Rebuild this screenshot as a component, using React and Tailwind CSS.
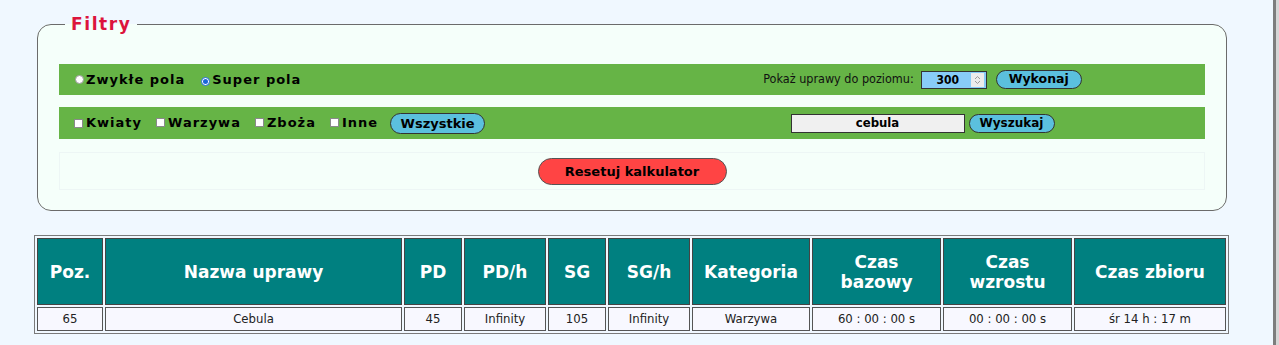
import React from "react";

const V = "font-['DejaVu_Sans',Verdana,sans-serif]";
const T = "font-['DejaVu_Sans_Condensed','DejaVu_Sans',Tahoma,sans-serif]";

function Radio({ checked }) {
  return checked ? (
    <span className="inline-flex w-[9px] h-[9px] rounded-full border border-[#1a66d9] bg-white items-center justify-center shrink-0">
      <span className="w-[5px] h-[5px] rounded-full bg-[#1a66d9]" />
    </span>
  ) : (
    <span className="inline-block w-[9px] h-[9px] rounded-full border border-[#9a9a9a] bg-white shrink-0" />
  );
}

function Check() {
  return <span className="inline-block w-[9px] h-[9px] border border-[#8a8a8a] bg-white shrink-0" />;
}

const headers = [
  ["Poz.", "w-[66px]"],
  ["Nazwa uprawy", "w-[297px]"],
  ["PD", "w-[58px]"],
  ["PD/h", "w-[82px]"],
  ["SG", "w-[58px]"],
  ["SG/h", "w-[82px]"],
  ["Kategoria", "w-[118px]"],
  ["Czas bazowy", "w-[129px]"],
  ["Czas wzrostu", "w-[129px]"],
  ["Czas zbioru", "w-[152px]"],
];

const row = ["65", "Cebula", "45", "Infinity", "105", "Infinity", "Warzywa", "60 : 00 : 00 s", "00 : 00 : 00 s", "śr 14 h : 17 m"];

export default function App() {
  return (
    <div className="min-h-[345px] w-[1279px] bg-[#f0f8ff] flex">
      <div className="flex-1">
        <fieldset className={`mt-[14px] ml-[37px] w-[1190px] border border-[#6b6b6b] rounded-[14px] bg-[#f5fffa] px-[21px] pt-[30px] pb-[20px] ${V}`}>
          <legend className="ml-[6px] px-[6px] text-[17px] leading-[20px] font-bold tracking-[1.6px] text-[#dc143c]">Filtry</legend>

          <div className="grid grid-cols-2 h-[31px] bg-[#66b446] text-black">
            <div className="flex items-center pl-[16px] text-[13px] font-bold tracking-[1px]">
              <Radio />
              <span className="ml-[2px]">Zwykłe pola</span>
              <span className="ml-[16px]"><Radio checked /></span>
              <span className="ml-[2px]">Super pola</span>
            </div>
            <div className="flex items-center justify-center pl-[8px]">
              <span className={`${T} text-[12.5px] text-[#111]`}>Pokaż uprawy do poziomu:</span>
              <span className="ml-[7px] w-[66px] h-[18px] border border-[#333] bg-[#88ccf8] flex items-center">
                <span className={`flex-1 text-center ${T} font-bold text-[12px] pl-[3px]`}>300</span>
                <span className="w-[13px] h-[14px] mr-[2px] bg-[#ececec] flex items-center justify-center">
                  <svg width="7" height="10" viewBox="0 0 7 10" fill="none" stroke="#9a9a9a" strokeWidth="1">
                    <path d="M1 4 L3.5 1.5 L6 4" />
                    <path d="M1 6 L3.5 8.5 L6 6" />
                  </svg>
                </span>
              </span>
              <button className="ml-[9px] w-[86px] h-[19px] rounded-full border border-[#333] bg-[#5bc0de] text-[12.5px] font-bold leading-none text-black">Wykonaj</button>
            </div>
          </div>

          <div className="mt-[12px] grid grid-cols-2 h-[32px] bg-[#66b446] text-black">
            <div className="flex items-center pl-[15px] text-[13px] font-bold tracking-[1px]">
              <Check />
              <span className="ml-[3px]">Kwiaty</span>
              <span className="ml-[14px]"><Check /></span>
              <span className="ml-[3px]">Warzywa</span>
              <span className="ml-[14px]"><Check /></span>
              <span className="ml-[3px]">Zboża</span>
              <span className="ml-[14px]"><Check /></span>
              <span className="ml-[3px]">Inne</span>
              <button className="ml-[12px] w-[95px] h-[21px] rounded-full border border-[#333] bg-[#5bc0de] text-[13px] font-bold leading-none tracking-normal text-black">Wszystkie</button>
            </div>
            <div className="flex items-center justify-center pl-[8px]">
              <span className={`w-[174px] h-[19px] border border-[#333] bg-[#f0f0f0] flex items-center justify-center ${T} font-bold text-[13px]`}>cebula</span>
              <button className="ml-[4px] w-[86px] h-[19px] rounded-full border border-[#333] bg-[#5bc0de] text-[12px] font-bold leading-none text-black">Wyszukaj</button>
            </div>
          </div>

          <div className="mt-[13px] h-[38px] border border-[#edf6f5] flex items-center justify-center">
            <button className="w-[189px] h-[27px] rounded-full border border-[#555] bg-[#ff4444] text-[13px] font-bold leading-none text-black">Resetuj kalkulator</button>
          </div>
        </fieldset>

        <table className={`mt-[24px] ml-[34px] w-[1195px] table-fixed border-separate border-spacing-[2px] border border-[#7a7a7a] bg-[#f0f8ff] ${V}`}>
          <colgroup>
            {headers.map(([h, w]) => (
              <col key={h} className={w} />
            ))}
          </colgroup>
          <thead>
            <tr>
              {headers.map(([h]) => (
                <th key={h} className="h-[67px] border border-[#444] bg-[#008080] text-white text-[17px] leading-[20px] font-bold px-[10px] text-center align-middle">
                  {h}
                </th>
              ))}
            </tr>
          </thead>
          <tbody>
            <tr>
              {row.map((c, i) => (
                <td key={i} className={`h-[24px] border border-[#555] bg-[#f8f8ff] text-[13px] text-[#222] text-center align-middle p-0 ${T}`}>
                  {c}
                </td>
              ))}
            </tr>
          </tbody>
        </table>
      </div>
      <div className="w-[6px] flex">
        <div className="w-[3px] bg-[#7d7d7d]" />
        <div className="w-[3px] bg-[#d6d6d6]" />
      </div>
    </div>
  );
}
